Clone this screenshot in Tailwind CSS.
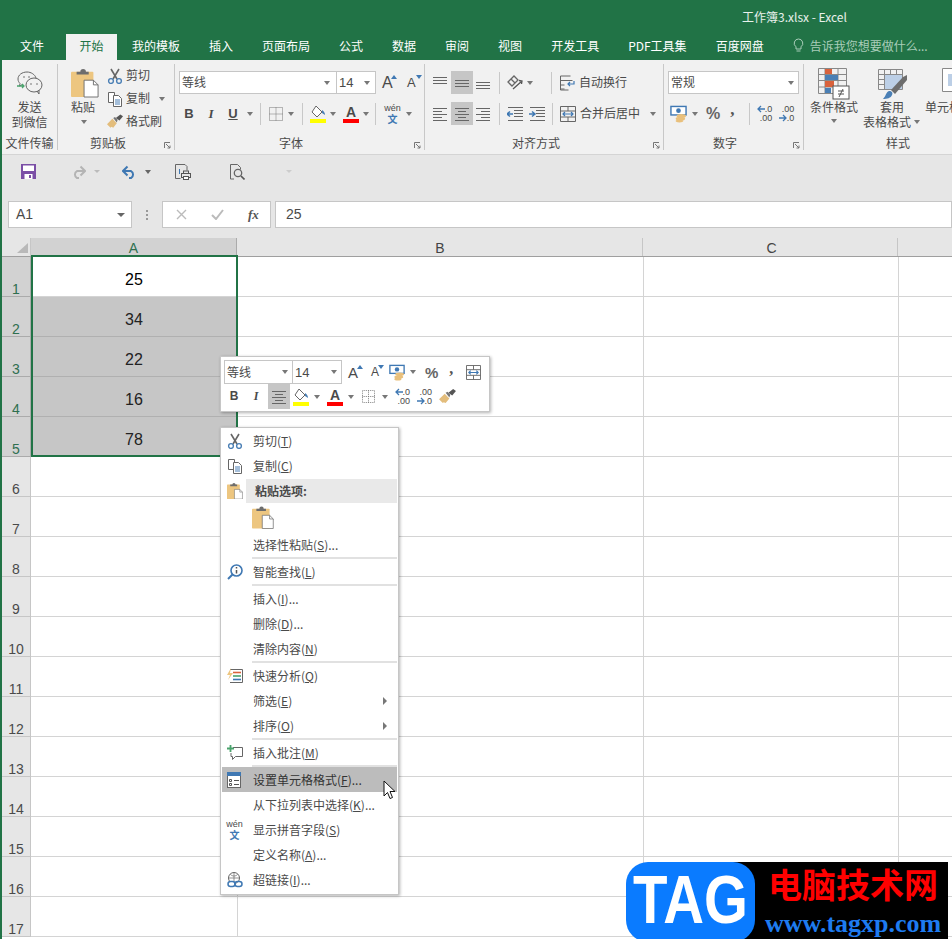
<!DOCTYPE html>
<html lang="zh-CN">
<head>
<meta charset="UTF-8">
<title>工作簿3.xlsx - Excel</title>
<script src="https://cdn.jsdelivr.net/npm/@tailwindcss/browser@4"></script>
</head>
<body class="bg-white">
<svg class="hidden" width="0" height="0">
  <defs>
    <symbol id="paste" viewBox="0 0 30 30"><rect x="0" y="3" width="24" height="27" rx="1" fill="#edc680"/><path d="M6 5V3h4a3 3 0 0 1 6 0h3v3H6z" fill="#6d6d6d"/><path d="M14 12h10l5 5v13H14z" fill="#fff" stroke="#6d6d6d"/><path d="M24 12v5h5" fill="none" stroke="#6d6d6d"/></symbol>
    <symbol id="cut" viewBox="0 0 16 16"><path d="M4 1l6 10M12 1L6 11" stroke="#666" stroke-width="1.6" fill="none"/><circle cx="4" cy="13" r="2.4" fill="none" stroke="#4a7fb5" stroke-width="1.4"/><circle cx="12" cy="13" r="2.4" fill="none" stroke="#4a7fb5" stroke-width="1.4"/></symbol>
    <symbol id="copy" viewBox="0 0 16 16"><path d="M1.500 1.500h6v10h-6z" fill="#fff" stroke="#666"/><path d="M6.500 4.500h5l3 3v8h-8z" fill="#fff" stroke="#666"/><path d="M8 9h5M8 11h5M8 13h5" stroke="#4a7fb5"/></symbol>
    <symbol id="brush" viewBox="0 0 18 16"><path d="M0 11l6-6 5 5-4 5-2-1-1 1z" fill="#e3bd7c"/><path d="M7 4l2-1 3 3-1 3z" fill="#777"/><path d="M10 4l5-4 3 2-4 5z" fill="#555"/></symbol>
    <symbol id="fill" viewBox="0 0 16 18"><path d="M6 1l6 6-5 5-5-5z" fill="#fff" stroke="#666"/><path d="M12 5c2 1 3 3 3 5l-3-2z" fill="#4a7fb5"/><rect x="0" y="14" width="16" height="4" fill="#ffff00"/></symbol>
    <symbol id="grid" viewBox="0 0 14 14"><path d="M.5.500h13v13H.500zM7 .5v13M.5 7h13" fill="none" stroke="#777" stroke-dasharray="1 1"/></symbol>
    <symbol id="money" viewBox="0 0 18 18"><rect x="1" y="1" width="16" height="9" fill="#fff" stroke="#3f78b3" stroke-width="1.500"/><circle cx="9" cy="5.500" r="2.500" fill="#3f78b3"/><ellipse cx="12" cy="11" rx="5" ry="2" fill="#e9c07c"/><ellipse cx="11" cy="14" rx="5" ry="2" fill="#e9c07c"/><ellipse cx="10" cy="16.500" rx="4" ry="1.500" fill="#e9c07c"/></symbol>
    <symbol id="merge" viewBox="0 0 16 16"><path d="M.5.500h15v15H.5zM.5 5h15M.5 11h15M8 .5V5M8 11v4.500" fill="none" stroke="#666"/><path d="M3 8h10M5 6L3 8l2 2M11 6l2 2-2 2" fill="none" stroke="#3f78b3" stroke-width="1.200"/></symbol>
  </defs>
</svg>
<div class="relative w-[952px] h-[939px] overflow-hidden border-l-2 border-[#217346] font-['Noto_Sans_CJK_SC',sans-serif] text-[12px] leading-[15px] text-[#4a4a4a]">

  <!-- title + tabs -->
  <div class="bg-[#217346] h-[60px] -ml-[2px] pl-[2px]">
    <div class="h-[34px] pl-[740px] pt-[9px] text-white/90 whitespace-nowrap">工作簿3.xlsx - Excel</div>
    <div class="flex items-start h-[26px] pt-[4px] text-white whitespace-nowrap">
      <span class="ml-[18px]">文件</span>
      <span class="ml-[22px] -mt-[4px] w-[51px] h-[26px] leading-[23px] text-center bg-[#f1f1f1] text-[#217346]">开始</span>
      <span class="ml-[15px]">我的模板</span>
      <span class="ml-[29px]">插入</span>
      <span class="ml-[29px]">页面布局</span>
      <span class="ml-[29px]">公式</span>
      <span class="ml-[29px]">数据</span>
      <span class="ml-[29px]">审阅</span>
      <span class="ml-[29px]">视图</span>
      <span class="ml-[29px]">开发工具</span>
      <span class="ml-[29px]">PDF工具集</span>
      <span class="ml-[29px]">百度网盘</span>
      <svg class="ml-[29px] w-[11px] h-[15px]" viewBox="0 0 11 15"><path d="M5.500 1a4.300 4.300 0 0 0-2.500 7.800V11h5V8.800A4.300 4.300 0 0 0 5.500 1zM3.500 13h4" fill="none" stroke="#a9cdb9"/></svg>
      <span class="ml-[6px] text-[#a9cdb9]">告诉我您想要做什么...</span>
    </div>
  </div>

  <!-- ribbon -->
  <div class="flex h-[95px] pt-[4px] bg-[#f1f1f1] border-b border-[#d4d4d4] whitespace-nowrap">

    <div class="relative flex flex-col items-center w-[56px] h-[86px] border-r border-[#c8c8c8]">
      <svg class="mt-[7px] w-[26px] h-[24px]" viewBox="0 0 26 24"><path d="M10 1C5 1 1 4 1 8c0 2 1 3.500 2 4.500L2.500 15l3-1.500" fill="none" stroke="#666"/><path d="M10 1c4 0 8 2.500 9 6" fill="none" stroke="#666"/><ellipse cx="17" cy="14" rx="8" ry="7" fill="#f1f1f1" stroke="#666"/><path d="M20 20l2 3v-4" fill="none" stroke="#666"/><circle cx="14" cy="13" r=".8" fill="#666"/><circle cx="20" cy="13" r=".8" fill="#666"/><circle cx="7" cy="6" r=".8" fill="#666"/><circle cx="12" cy="6" r=".8" fill="#666"/><path d="M0 15h7M5 13l2 2-2 2" fill="none" stroke="#4aa36d" stroke-width="1.300"/></svg>
      <div class="mt-[4px] text-center">发送<br>到微信</div>
      <div class="mt-auto h-[14px] leading-[14px]">文件传输</div>
    </div>

    <div class="relative flex flex-col w-[117px] h-[86px] border-r border-[#c8c8c8]">
      <div class="flex">
        <div class="ml-[13px] w-[28px] flex flex-col">
          <svg class="mt-[4px] w-[28px] h-[30px]"><use href="#paste"/></svg>
          <div class="mt-[1px]">粘贴</div>
          <i class="block ml-[10px] mt-[6px] w-0 h-0 border-x-[3.5px] border-t-[4px] border-x-transparent border-t-[#777]"></i>
        </div>
        <div class="ml-[8px] flex flex-col">
          <div class="flex items-center h-[23px]"><svg class="w-[16px] h-[16px]"><use href="#cut"/></svg><span class="ml-[3px] -translate-y-px">剪切</span></div>
          <div class="flex items-center h-[23px]"><svg class="w-[16px] h-[16px]"><use href="#copy"/></svg><span class="ml-[3px] -translate-y-px">复制</span><i class="block ml-[9px] w-0 h-0 border-x-[3.5px] border-t-[4px] border-x-transparent border-t-[#777]"></i></div>
          <div class="flex items-center h-[23px]"><svg class="w-[16px] h-[15px]"><use href="#brush"/></svg><span class="ml-[3px] -translate-y-px">格式刷</span></div>
        </div>
      </div>
      <div class="mt-auto h-[14px] leading-[14px] pl-[32px]">剪贴板</div>
      <svg class="absolute right-[3px] bottom-[1px] w-[7px] h-[7px]" viewBox="0 0 7 7"><path d="M.5 6V.5H6M2 2l4 4M6 3.500V6H3.500" fill="none" stroke="#777"/></svg>
    </div>

    <div class="relative flex flex-col w-[250px] h-[86px] pl-[4px] pt-[7px] border-r border-[#c8c8c8]">
      <div class="flex items-center h-[23px]">
        <div class="flex items-center justify-between w-[158px] h-[23px] pl-[2px] pr-[6px] bg-white border border-[#c6c6c6]"><span class="-translate-y-px">等线</span><i class="block w-0 h-0 border-x-[3.5px] border-t-[4px] border-x-transparent border-t-[#777]"></i></div>
        <div class="flex items-center justify-between w-[40px] h-[23px] pl-[2px] pr-[5px] -ml-[1px] bg-white border border-[#c6c6c6] font-['Liberation_Sans'] text-[13px]">14<i class="block w-0 h-0 border-x-[3.5px] border-t-[4px] border-x-transparent border-t-[#777]"></i></div>
        <span class="relative ml-[6px] w-[14px] font-['Liberation_Sans'] text-[16px]">A<i class="absolute -right-[1px] top-0 w-0 h-0 border-x-[3px] border-b-[4px] border-x-transparent border-b-[#3f78b3]"></i></span>
        <span class="relative ml-[11px] w-[14px] font-['Liberation_Sans'] text-[13px]">A<i class="absolute -right-[1px] top-0 w-0 h-0 border-x-[3px] border-t-[4px] border-x-transparent border-t-[#3f78b3]"></i></span>
      </div>
      <div class="flex items-center h-[23px] mt-[8px] -ml-[1px] font-['Liberation_Sans']">
        <b class="w-[22px] text-center text-[13px]">B</b>
        <i class="w-[22px] text-center text-[13px] font-['Liberation_Serif'] font-bold">I</i>
        <u class="w-[22px] text-center text-[13px] font-bold">U</u>
        <i class="block ml-[3px] w-0 h-0 border-x-[3.5px] border-t-[4px] border-x-transparent border-t-[#777]"></i>
        <div class="ml-[7px] w-px h-[22px] bg-[#c8c8c8]"></div>
        <svg class="ml-[8px] w-[14px] h-[14px]"><use href="#grid"/></svg>
        <i class="block ml-[5px] w-0 h-0 border-x-[3.5px] border-t-[4px] border-x-transparent border-t-[#777]"></i>
        <div class="ml-[8px] w-px h-[22px] bg-[#c8c8c8]"></div>
        <svg class="ml-[7px] w-[16px] h-[18px]"><use href="#fill"/></svg>
        <i class="block ml-[4px] w-0 h-0 border-x-[3.5px] border-t-[4px] border-x-transparent border-t-[#777]"></i>
        <span class="ml-[7px] w-[16px] h-[18px] text-center font-bold text-[14px] leading-[14px] border-b-4 border-[#ff0000]">A</span>
        <i class="block ml-[4px] w-0 h-0 border-x-[3.5px] border-t-[4px] border-x-transparent border-t-[#777]"></i>
        <div class="ml-[6px] w-px h-[22px] bg-[#c8c8c8]"></div>
        <div class="flex flex-col items-center ml-[8px] w-[17px] h-[22px]"><span class="text-[9px] leading-[10px]">wén</span><span class="font-['Noto_Sans_CJK_SC'] font-bold text-[10px] leading-[12px] text-[#3f78b3]">文</span></div>
        <i class="block ml-[5px] w-0 h-0 border-x-[3.5px] border-t-[4px] border-x-transparent border-t-[#777]"></i>
      </div>
      <div class="mt-auto h-[14px] leading-[14px] pl-[100px]">字体</div>
      <svg class="absolute right-[3px] bottom-[1px] w-[7px] h-[7px]" viewBox="0 0 7 7"><path d="M.5 6V.5H6M2 2l4 4M6 3.500V6H3.500" fill="none" stroke="#777"/></svg>
    </div>

    <div class="relative flex flex-col w-[239px] h-[86px] pl-[8px] pt-[7px] border-r border-[#c8c8c8]">
      <div class="flex items-center h-[23px]">
        <svg class="w-[14px] h-[14px]" viewBox="0 0 14 14"><path d="M0 1.500h14M0 4.500h14M0 7.500h14" stroke="#666"/></svg>
        <div class="flex items-center justify-center ml-[4px] w-[22px] h-[23px] bg-[#c6c6c6]"><svg class="w-[14px] h-[14px]" viewBox="0 0 14 14"><path d="M0 4.500h14M0 7.500h14M0 10.500h14" stroke="#666"/></svg></div>
        <svg class="ml-[3px] w-[14px] h-[14px]" viewBox="0 0 14 14"><path d="M0 6.500h14M0 9.500h14M0 12.500h14" stroke="#666"/></svg>
        <div class="ml-[9px] w-px h-[22px] bg-[#c8c8c8]"></div>
        <svg class="ml-[7px] w-[17px] h-[16px]" viewBox="0 0 17 16"><path d="M1 7l6-6 4 4-6 6zM4 4l4 4" fill="none" stroke="#666" stroke-width="1.300"/><path d="M6 14l9-8M12 5.500l3 .5-.5 3" fill="none" stroke="#555" stroke-width="1.300"/></svg>
        <i class="block ml-[3px] w-0 h-0 border-x-[3.5px] border-t-[4px] border-x-transparent border-t-[#777]"></i>
        <div class="ml-[18px] w-px h-[22px] bg-[#c8c8c8]"></div>
        <svg class="ml-[7px] w-[16px] h-[16px]" viewBox="0 0 16 16"><path d="M1.500 1h10M1.500 1v14h8M1.500 5.500h12M1.500 10h4M1.500 14h4" fill="none" stroke="#666"/><path d="M15 6v3h-6M11 7l-2 2 2 2" fill="none" stroke="#3f78b3" stroke-width="1.200"/></svg>
        <span class="ml-[4px] -translate-y-px">自动换行</span>
      </div>
      <div class="flex items-center h-[23px] mt-[8px]">
        <svg class="w-[14px] h-[14px]" viewBox="0 0 14 14"><path d="M0 1.500h14M0 4.500h9M0 7.500h14M0 10.500h9M0 13.500h14" stroke="#666"/></svg>
        <div class="flex items-center justify-center ml-[4px] w-[22px] h-[23px] bg-[#c6c6c6]"><svg class="w-[14px] h-[14px]" viewBox="0 0 14 14"><path d="M0 1.500h14M3 4.500h8M0 7.500h14M3 10.500h8M0 13.500h14" stroke="#666"/></svg></div>
        <svg class="ml-[3px] w-[14px] h-[14px]" viewBox="0 0 14 14"><path d="M0 1.500h14M5 4.500h9M0 7.500h14M5 10.500h9M0 13.500h14" stroke="#666"/></svg>
        <div class="ml-[9px] w-px h-[22px] bg-[#c8c8c8]"></div>
        <svg class="ml-[7px] w-[16px] h-[14px]" viewBox="0 0 16 14"><path d="M0 7h6M3 4.500L0 7l3 2.500" fill="none" stroke="#3f78b3" stroke-width="1.500"/><path d="M1 .5h15M7 3.500h9M7 6.500h9M7 9.500h9M1 13.500h15" stroke="#666"/></svg>
        <svg class="ml-[6px] w-[16px] h-[14px]" viewBox="0 0 16 14"><path d="M0 7h6M3 4.500L6 7 3 9.500" fill="none" stroke="#3f78b3" stroke-width="1.500"/><path d="M1 .5h15M7 3.500h9M7 6.500h9M7 9.500h9M1 13.500h15" stroke="#666"/></svg>
        <div class="ml-[7px] w-px h-[22px] bg-[#c8c8c8]"></div>
        <svg class="ml-[7px] w-[16px] h-[16px]"><use href="#merge"/></svg>
        <span class="ml-[4px] -translate-y-px">合并后居中</span>
        <i class="block ml-[10px] w-0 h-0 border-x-[3.5px] border-t-[4px] border-x-transparent border-t-[#777]"></i>
      </div>
      <div class="mt-auto h-[14px] leading-[14px] pl-[79px]">对齐方式</div>
      <svg class="absolute right-[3px] bottom-[1px] w-[7px] h-[7px]" viewBox="0 0 7 7"><path d="M.5 6V.5H6M2 2l4 4M6 3.500V6H3.500" fill="none" stroke="#777"/></svg>
    </div>

    <div class="relative flex flex-col w-[140px] h-[86px] pl-[4px] pt-[7px] border-r border-[#c8c8c8]">
      <div class="flex items-center justify-between w-[131px] h-[23px] pl-[2px] pr-[4px] bg-white border border-[#c6c6c6]"><span class="-translate-y-px">常规</span><i class="block w-0 h-0 border-x-[3.5px] border-t-[4px] border-x-transparent border-t-[#777]"></i></div>
      <div class="flex items-center h-[23px] mt-[8px]">
        <svg class="ml-[2px] w-[17px] h-[18px]"><use href="#money"/></svg>
        <i class="block ml-[5px] w-0 h-0 border-x-[3.5px] border-t-[4px] border-x-transparent border-t-[#777]"></i>
        <span class="ml-[8px] font-['Liberation_Sans'] text-[16px] font-bold text-[#666]">%</span>
        <span class="ml-[10px] w-[8px] font-['Liberation_Serif'] text-[17px] font-bold text-[#555] -mt-[8px]">,</span>
        <div class="ml-[11px] w-px h-[22px] bg-[#c8c8c8]"></div>
        <div class="relative ml-[7px] w-[15px] h-[18px] font-['Liberation_Sans'] text-[9px] leading-[9px] text-right"><svg class="absolute left-0 top-0 w-[8px] h-[8px]" viewBox="0 0 8 8"><path d="M8 4H1M4 1L1 4l3 3" fill="none" stroke="#3f78b3" stroke-width="1.300"/></svg>.0<br>.00</div>
        <div class="relative ml-[7px] w-[15px] h-[18px] font-['Liberation_Sans'] text-[9px] leading-[9px] text-right"><svg class="absolute left-0 bottom-[1px] w-[8px] h-[8px]" viewBox="0 0 8 8"><path d="M0 4h7M4 1l3 3-3 3" fill="none" stroke="#3f78b3" stroke-width="1.300"/></svg>.00<br>.0</div>
      </div>
      <div class="mt-auto h-[14px] leading-[14px] pl-[45px]">数字</div>
      <svg class="absolute right-[3px] bottom-[1px] w-[7px] h-[7px]" viewBox="0 0 7 7"><path d="M.5 6V.5H6M2 2l4 4M6 3.500V6H3.500" fill="none" stroke="#777"/></svg>
    </div>

    <div class="flex flex-col h-[86px] w-[148px] overflow-hidden">
      <div class="flex">
        <div class="ml-[6px] w-[48px] flex flex-col items-center">
          <svg class="mt-[4px] w-[32px] h-[32px]" viewBox="0 0 32 32"><path d="M.5.500h28v25H.5zM.5 6.500h28M.5 12.500h28M.5 19h28M7 .5v25M20 .5v25" fill="none" stroke="#888"/><rect x="7" y="1" width="7" height="5" fill="#d9623c"/><rect x="7" y="7" width="13" height="5" fill="#4a7fb5"/><rect x="7" y="13" width="9" height="6" fill="#d9623c"/><rect x="7" y="20" width="6" height="5" fill="#4a7fb5"/><rect x="15" y="18" width="16" height="13" fill="#fff" stroke="#555"/><path d="M20 23h6M20 26h6M25 21l-4 8" stroke="#555" fill="none"/></svg>
          <div class="-mt-[1px]">条件格式</div>
          <i class="block mt-[5px] w-0 h-0 border-x-[3.5px] border-t-[4px] border-x-transparent border-t-[#777]"></i>
        </div>
        <div class="ml-[5px] w-[56px] flex flex-col">
          <svg class="mt-[5px] ml-[15px] w-[30px] h-[30px]" viewBox="0 0 30 30"><path d="M.5.500h24v20H.5zM.5 5.500h24M.5 10.500h24M.5 15.500h24M6.500.5v20M12.500.5v20M18.500.5v20" fill="none" stroke="#888"/><rect x="7" y="6" width="17" height="14" fill="#bccfe6"/><path d="M5 30c3-3 3-7 6-8 3 0 4 2 3 4-1 3-5 4-9 4z" fill="#4a7fb5"/><path d="M13 21l12-13 4-2v5L17 25z" fill="#6d6d6d"/></svg>
          <div class="pl-[17px]">套用</div>
          <div class="flex items-center">表格格式<i class="block ml-[3px] w-0 h-0 border-x-[3.5px] border-t-[4px] border-x-transparent border-t-[#777]"></i></div>
        </div>
        <div class="ml-[6px] flex flex-col">
          <svg class="mt-[4px] ml-[17px] w-[32px] h-[30px]" viewBox="0 0 32 30"><path d="M.5.500h30v23H.5z" fill="#fff" stroke="#888"/><rect x="6" y="6" width="20" height="12" fill="#bccfe6"/></svg>
          <div class="mt-[1px]">单元格样式</div>
        </div>
      </div>
      <div class="mt-auto h-[14px] leading-[14px] pl-[82px]">样式</div>
    </div>
  </div>

  <!-- quick access -->
  <div class="flex items-center h-[35px] pb-[2px] bg-[#e6e6e6]">
    <svg class="ml-[19px] w-[15px] h-[15px]" viewBox="0 0 15 15"><path d="M0 0h15v15H0z" fill="#7b4fa6"/><rect x="2" y="1.500" width="11" height="5.500" fill="#fff"/><rect x="3.500" y="10" width="8" height="5" fill="#fff"/><rect x="8" y="11" width="2" height="3" fill="#7b4fa6"/></svg>
    <svg class="ml-[35px] w-[15px] h-[14px]" viewBox="0 0 15 14"><path d="M13.500 6H6a4 4 0 0 0 0 7h2M9.500 1.500L14 6 9.500 10.500" fill="none" stroke="#b4b4b4" stroke-width="2"/></svg>
    <i class="block ml-[8px] w-0 h-0 border-x-[3px] border-t-[3px] border-x-transparent border-t-[#bbb]"></i>
    <svg class="ml-[22px] w-[15px] h-[14px]" viewBox="0 0 15 14"><path d="M1.500 6H9a4 4 0 0 1 0 7H7M5.500 1.500L1 6l4.500 4.500" fill="none" stroke="#3f78b3" stroke-width="2"/></svg>
    <i class="block ml-[8px] w-0 h-0 border-x-[3.5px] border-t-[4px] border-x-transparent border-t-[#666]"></i>
    <svg class="ml-[24px] w-[16px] h-[16px]" viewBox="0 0 16 16"><path d="M5 .5H.5v14h5M5 .5h5l2 2v4" fill="none" stroke="#666"/><path d="M4.500 5v5" stroke="#3f78b3"/><rect x="6.500" y="9.500" width="9" height="4" fill="none" stroke="#555"/><rect x="8.500" y="7" width="5" height="2.500" fill="none" stroke="#555"/><rect x="8.500" y="12.500" width="5" height="3" fill="#fff" stroke="#555"/></svg>
    <svg class="ml-[39px] w-[15px] h-[16px]" viewBox="0 0 15 16"><path d="M4 15H.5V.5h7l3 3v2" fill="none" stroke="#666"/><circle cx="8" cy="9" r="3.700" fill="none" stroke="#666" stroke-width="1.300"/><path d="M11 12l3.500 3.500" stroke="#555" stroke-width="1.600"/></svg>
    <i class="block ml-[41px] w-0 h-0 border-x-[3px] border-t-[3px] border-x-transparent border-t-[#ccc]"></i>
  </div>

  <!-- formula bar -->
  <div class="flex items-start h-[48px] pt-[11px] bg-[#e6e6e6]">
    <div class="flex items-center justify-between ml-[6px] w-[124px] h-[27px] pl-[7px] pr-[6px] bg-white border border-[#c6c6c6] font-['Liberation_Sans'] text-[14px]">A1<i class="block w-0 h-0 border-x-[4px] border-t-[4px] border-x-transparent border-t-[#666]"></i></div>
    <div class="flex flex-col justify-center gap-[2px] ml-[14px] w-[2px] h-[27px]"><i class="block w-[2px] h-[2px] bg-[#999]"></i><i class="block w-[2px] h-[2px] bg-[#999]"></i><i class="block w-[2px] h-[2px] bg-[#999]"></i></div>
    <div class="flex items-center ml-[14px] w-[109px] h-[27px] bg-white border border-[#c6c6c6]">
      <svg class="ml-[13px] w-[11px] h-[11px]" viewBox="0 0 11 11"><path d="M1 1l9 9M10 1l-9 9" stroke="#bbb" stroke-width="1.400"/></svg>
      <svg class="ml-[24px] w-[13px] h-[11px]" viewBox="0 0 13 11"><path d="M1 6l4 4 7-9" fill="none" stroke="#bbb" stroke-width="2"/></svg>
      <span class="ml-[24px] font-['Liberation_Serif'] italic font-bold text-[13px] text-[#555]">fx</span>
    </div>
    <div class="ml-[4px] flex-1 h-[27px] pl-[10px] leading-[25px] bg-white border border-[#c6c6c6] font-['Liberation_Sans'] text-[14px]">25</div>
  </div>

  <!-- sheet -->
  <div class="flex h-[19px] bg-[#e6e6e6] border-b border-[#9f9f9f] font-['Liberation_Sans'] text-[14px] leading-[20px] text-[#444]">
    <div class="w-[29px] pl-[15px] pt-[5px] border-r border-[#c6c6c6]"><div class="w-0 h-0 border-l-[11px] border-b-[10px] border-l-transparent border-b-[#b9b9b9]"></div></div>
    <div class="w-[206px] text-center bg-[#d2d2d2] border-r border-[#ababab] text-[#2f6f4f]">A</div>
    <div class="w-[406px] pl-[1px] text-center border-r border-[#c6c6c6]">B</div>
    <div class="w-[255px] pl-[3px] text-center border-r border-[#c6c6c6]">C</div>
    <div class="flex-1"></div>
  </div>

  <div class="font-['Liberation_Sans'] text-[14px] leading-[14px]">
    <div class="flex h-[40px]"><div class="flex items-end justify-center w-[29px] bg-[#d2d2d2] border-r border-b border-[#ababab] text-[#2f6f4f]">1</div><div class="w-[206px] pt-[8px] text-center text-[16px] leading-[30px] text-black border-b border-[#d4d4d4]">25</div><div class="w-[406px] border-l border-b border-[#d4d4d4]"></div><div class="w-[255px] border-l border-b border-[#d4d4d4]"></div><div class="flex-1 border-l border-b border-[#d4d4d4]"></div></div>
    <div class="flex h-[40px]"><div class="flex items-end justify-center w-[29px] bg-[#d2d2d2] border-r border-b border-[#ababab] text-[#2f6f4f]">2</div><div class="w-[206px] pt-[8px] text-center text-[16px] leading-[30px] text-[#222] bg-[#c6c6c6] border-b border-[#b0b0b0]">34</div><div class="w-[406px] border-l border-b border-[#d4d4d4]"></div><div class="w-[255px] border-l border-b border-[#d4d4d4]"></div><div class="flex-1 border-l border-b border-[#d4d4d4]"></div></div>
    <div class="flex h-[40px]"><div class="flex items-end justify-center w-[29px] bg-[#d2d2d2] border-r border-b border-[#ababab] text-[#2f6f4f]">3</div><div class="w-[206px] pt-[8px] text-center text-[16px] leading-[30px] text-[#222] bg-[#c6c6c6] border-b border-[#b0b0b0]">22</div><div class="w-[406px] border-l border-b border-[#d4d4d4]"></div><div class="w-[255px] border-l border-b border-[#d4d4d4]"></div><div class="flex-1 border-l border-b border-[#d4d4d4]"></div></div>
    <div class="flex h-[40px]"><div class="flex items-end justify-center w-[29px] bg-[#d2d2d2] border-r border-b border-[#ababab] text-[#2f6f4f]">4</div><div class="w-[206px] pt-[8px] text-center text-[16px] leading-[30px] text-[#222] bg-[#c6c6c6] border-b border-[#b0b0b0]">16</div><div class="w-[406px] border-l border-b border-[#d4d4d4]"></div><div class="w-[255px] border-l border-b border-[#d4d4d4]"></div><div class="flex-1 border-l border-b border-[#d4d4d4]"></div></div>
    <div class="flex h-[40px]"><div class="flex items-end justify-center w-[29px] bg-[#d2d2d2] border-r border-b border-[#ababab] text-[#2f6f4f]">5</div><div class="w-[206px] pt-[8px] text-center text-[16px] leading-[30px] text-[#222] bg-[#c6c6c6] border-b border-[#b0b0b0]">78</div><div class="w-[406px] border-l border-b border-[#d4d4d4]"></div><div class="w-[255px] border-l border-b border-[#d4d4d4]"></div><div class="flex-1 border-l border-b border-[#d4d4d4]"></div></div>
    <div class="flex h-[40px]"><div class="flex items-end justify-center w-[29px] bg-[#e6e6e6] border-r border-b border-[#c6c6c6]">6</div><div class="w-[206px] border-b border-[#d4d4d4]"></div><div class="w-[406px] border-l border-b border-[#d4d4d4]"></div><div class="w-[255px] border-l border-b border-[#d4d4d4]"></div><div class="flex-1 border-l border-b border-[#d4d4d4]"></div></div>
    <div class="flex h-[40px]"><div class="flex items-end justify-center w-[29px] bg-[#e6e6e6] border-r border-b border-[#c6c6c6]">7</div><div class="w-[206px] border-b border-[#d4d4d4]"></div><div class="w-[406px] border-l border-b border-[#d4d4d4]"></div><div class="w-[255px] border-l border-b border-[#d4d4d4]"></div><div class="flex-1 border-l border-b border-[#d4d4d4]"></div></div>
    <div class="flex h-[40px]"><div class="flex items-end justify-center w-[29px] bg-[#e6e6e6] border-r border-b border-[#c6c6c6]">8</div><div class="w-[206px] border-b border-[#d4d4d4]"></div><div class="w-[406px] border-l border-b border-[#d4d4d4]"></div><div class="w-[255px] border-l border-b border-[#d4d4d4]"></div><div class="flex-1 border-l border-b border-[#d4d4d4]"></div></div>
    <div class="flex h-[40px]"><div class="flex items-end justify-center w-[29px] bg-[#e6e6e6] border-r border-b border-[#c6c6c6]">9</div><div class="w-[206px] border-b border-[#d4d4d4]"></div><div class="w-[406px] border-l border-b border-[#d4d4d4]"></div><div class="w-[255px] border-l border-b border-[#d4d4d4]"></div><div class="flex-1 border-l border-b border-[#d4d4d4]"></div></div>
    <div class="flex h-[40px]"><div class="flex items-end justify-center w-[29px] bg-[#e6e6e6] border-r border-b border-[#c6c6c6]">10</div><div class="w-[206px] border-b border-[#d4d4d4]"></div><div class="w-[406px] border-l border-b border-[#d4d4d4]"></div><div class="w-[255px] border-l border-b border-[#d4d4d4]"></div><div class="flex-1 border-l border-b border-[#d4d4d4]"></div></div>
    <div class="flex h-[40px]"><div class="flex items-end justify-center w-[29px] bg-[#e6e6e6] border-r border-b border-[#c6c6c6]">11</div><div class="w-[206px] border-b border-[#d4d4d4]"></div><div class="w-[406px] border-l border-b border-[#d4d4d4]"></div><div class="w-[255px] border-l border-b border-[#d4d4d4]"></div><div class="flex-1 border-l border-b border-[#d4d4d4]"></div></div>
    <div class="flex h-[40px]"><div class="flex items-end justify-center w-[29px] bg-[#e6e6e6] border-r border-b border-[#c6c6c6]">12</div><div class="w-[206px] border-b border-[#d4d4d4]"></div><div class="w-[406px] border-l border-b border-[#d4d4d4]"></div><div class="w-[255px] border-l border-b border-[#d4d4d4]"></div><div class="flex-1 border-l border-b border-[#d4d4d4]"></div></div>
    <div class="flex h-[40px]"><div class="flex items-end justify-center w-[29px] bg-[#e6e6e6] border-r border-b border-[#c6c6c6]">13</div><div class="w-[206px] border-b border-[#d4d4d4]"></div><div class="w-[406px] border-l border-b border-[#d4d4d4]"></div><div class="w-[255px] border-l border-b border-[#d4d4d4]"></div><div class="flex-1 border-l border-b border-[#d4d4d4]"></div></div>
    <div class="flex h-[40px]"><div class="flex items-end justify-center w-[29px] bg-[#e6e6e6] border-r border-b border-[#c6c6c6]">14</div><div class="w-[206px] border-b border-[#d4d4d4]"></div><div class="w-[406px] border-l border-b border-[#d4d4d4]"></div><div class="w-[255px] border-l border-b border-[#d4d4d4]"></div><div class="flex-1 border-l border-b border-[#d4d4d4]"></div></div>
    <div class="flex h-[40px]"><div class="flex items-end justify-center w-[29px] bg-[#e6e6e6] border-r border-b border-[#c6c6c6]">15</div><div class="w-[206px] border-b border-[#d4d4d4]"></div><div class="w-[406px] border-l border-b border-[#d4d4d4]"></div><div class="w-[255px] border-l border-b border-[#d4d4d4]"></div><div class="flex-1 border-l border-b border-[#d4d4d4]"></div></div>
    <div class="flex h-[40px]"><div class="flex items-end justify-center w-[29px] bg-[#e6e6e6] border-r border-b border-[#c6c6c6]">16</div><div class="w-[206px] border-b border-[#d4d4d4]"></div><div class="w-[406px] border-l border-b border-[#d4d4d4]"></div><div class="w-[255px] border-l border-b border-[#d4d4d4]"></div><div class="flex-1 border-l border-b border-[#d4d4d4]"></div></div>
    <div class="flex h-[40px]"><div class="flex items-end justify-center w-[29px] bg-[#e6e6e6] border-r border-b border-[#c6c6c6]">17</div><div class="w-[206px] border-b border-[#d4d4d4]"></div><div class="w-[406px] border-l border-b border-[#d4d4d4]"></div><div class="w-[255px] border-l border-b border-[#d4d4d4]"></div><div class="flex-1 border-l border-b border-[#d4d4d4]"></div></div>
  </div>

  <!-- selection outline -->
  <div class="absolute left-[29px] top-[255px] w-[207px] h-[202px] border-[2px] border-[#217346]"></div>

  <!-- mini toolbar -->
  <div class="absolute left-[218px] top-[356px] w-[270px] h-[56px] pt-[3px] pl-[3px] bg-white border border-[#c6c6c6] shadow-[1px_1px_3px_rgba(0,0,0,.3)] whitespace-nowrap">
    <div class="flex items-center h-[24px]">
      <div class="flex items-center justify-between w-[69px] h-[24px] pl-[2px] pr-[4px] border border-[#c6c6c6]"><span class="-translate-y-px">等线</span><i class="block w-0 h-0 border-x-[3px] border-t-[4px] border-x-transparent border-t-[#777]"></i></div>
      <div class="flex items-center justify-between w-[50px] h-[24px] pl-[2px] pr-[4px] -ml-[1px] border border-[#c6c6c6] font-['Liberation_Sans'] text-[13px]">14<i class="block w-0 h-0 border-x-[3px] border-t-[4px] border-x-transparent border-t-[#777]"></i></div>
      <span class="relative ml-[6px] w-[14px] font-['Liberation_Sans'] text-[15px]">A<i class="absolute -right-[1px] top-0 w-0 h-0 border-x-[3px] border-b-[4px] border-x-transparent border-b-[#3f78b3]"></i></span>
      <span class="relative ml-[9px] w-[12px] font-['Liberation_Sans'] text-[12px]">A<i class="absolute -right-[1px] top-0 w-0 h-0 border-x-[3px] border-t-[4px] border-x-transparent border-t-[#3f78b3]"></i></span>
      <svg class="ml-[6px] w-[16px] h-[17px]"><use href="#money"/></svg>
      <i class="block ml-[5px] w-0 h-0 border-x-[3px] border-t-[4px] border-x-transparent border-t-[#777]"></i>
      <span class="ml-[9px] font-['Liberation_Sans'] text-[15px] font-bold text-[#666]">%</span>
      <span class="ml-[11px] w-[6px] font-['Liberation_Serif'] text-[16px] font-bold text-[#555] -mt-[7px]">,</span>
      <svg class="ml-[11px] w-[15px] h-[15px]"><use href="#merge"/></svg>
    </div>
    <div class="flex items-center h-[25px] font-['Liberation_Sans']">
      <b class="ml-[1px] w-[18px] text-center text-[12px]">B</b>
      <i class="ml-[4px] w-[18px] text-center text-[12px] font-['Liberation_Serif'] font-bold">I</i>
      <div class="flex items-center justify-center ml-[3px] w-[22px] h-[25px] bg-[#c6c6c6]"><svg class="w-[14px] h-[14px]" viewBox="0 0 14 14"><path d="M0 1.500h14M3 4.500h8M0 7.500h14M3 10.500h8M0 13.500h14" stroke="#666"/></svg></div>
      <svg class="ml-[3px] w-[16px] h-[18px]"><use href="#fill"/></svg>
      <i class="block ml-[5px] w-0 h-0 border-x-[3px] border-t-[4px] border-x-transparent border-t-[#777]"></i>
      <span class="ml-[7px] w-[16px] h-[18px] text-center font-bold text-[14px] leading-[14px] border-b-4 border-[#ff0000]">A</span>
      <i class="block ml-[5px] w-0 h-0 border-x-[3px] border-t-[4px] border-x-transparent border-t-[#777]"></i>
      <svg class="ml-[8px] w-[13px] h-[13px]"><use href="#grid"/></svg>
      <i class="block ml-[7px] w-0 h-0 border-x-[3px] border-t-[4px] border-x-transparent border-t-[#777]"></i>
      <div class="relative ml-[7px] w-[15px] h-[18px] text-[9px] leading-[9px] text-right"><svg class="absolute left-0 top-0 w-[8px] h-[8px]" viewBox="0 0 8 8"><path d="M8 4H1M4 1L1 4l3 3" fill="none" stroke="#3f78b3" stroke-width="1.300"/></svg>.0<br>.00</div>
      <div class="relative ml-[7px] w-[15px] h-[18px] text-[9px] leading-[9px] text-right"><svg class="absolute left-0 bottom-[1px] w-[8px] h-[8px]" viewBox="0 0 8 8"><path d="M0 4h7M4 1l3 3-3 3" fill="none" stroke="#3f78b3" stroke-width="1.300"/></svg>.00<br>.0</div>
      <svg class="ml-[7px] w-[17px] h-[15px]"><use href="#brush"/></svg>
    </div>
  </div>

  <!-- context menu -->
  <div class="absolute left-[218px] top-[427px] w-[179px] h-[468px] bg-white border border-[#c6c6c6] shadow-[1px_1px_3px_rgba(0,0,0,.3)] whitespace-nowrap">
    <div class="flex items-center h-[25px] pl-[6px]"><svg class="w-[16px] h-[16px]"><use href="#cut"/></svg><span class="ml-[10px]">剪切(<u>T</u>)</span></div>
    <div class="flex items-center h-[25px] pl-[6px]"><svg class="w-[16px] h-[16px]"><use href="#copy"/></svg><span class="ml-[10px]">复制(<u>C</u>)</span></div>
    <div class="flex items-center h-[25px] pl-[6px]"><svg class="w-[16px] h-[16px]"><use href="#paste"/></svg><span class="flex items-center ml-[3px] w-[151px] h-[24px] pl-[9px] bg-[#e9e9e9] font-bold">粘贴选项:</span></div>
    <div class="h-[29px] pl-[31px] pt-[3px]"><svg class="w-[22px] h-[23px]"><use href="#paste"/></svg></div>
    <div class="flex items-center h-[25px] pl-[32px]">选择性粘贴(<u>S</u>)...</div>
    <div class="ml-[31px] mr-[1px] h-[2px] bg-[#e1e1e1]"></div>
    <div class="flex items-center h-[25px] pl-[6px]"><svg class="w-[16px] h-[16px]" viewBox="0 0 16 16"><circle cx="9.500" cy="6.500" r="5.500" fill="#fff" stroke="#3f78b3" stroke-width="1.600"/><path d="M5.500 10.500L1 15" stroke="#3f78b3" stroke-width="2"/><path d="M9.500 6v3.500M9.500 3v1.500" stroke="#555" stroke-width="1.500"/></svg><span class="ml-[10px]">智能查找(<u>L</u>)</span></div>
    <div class="ml-[31px] mr-[1px] h-[2px] bg-[#e1e1e1]"></div>
    <div class="flex items-center h-[25px] pl-[32px]">插入(<u>I</u>)...</div>
    <div class="flex items-center h-[25px] pl-[32px]">删除(<u>D</u>)...</div>
    <div class="flex items-center h-[25px] pl-[32px]">清除内容(<u>N</u>)</div>
    <div class="ml-[31px] mr-[1px] h-[2px] bg-[#e1e1e1]"></div>
    <div class="flex items-center h-[25px] pl-[6px]"><svg class="w-[16px] h-[16px]" viewBox="0 0 16 16"><path d="M3 1.500h12.500v13H3" fill="none" stroke="#666"/><path d="M6 4.500h8" stroke="#d9623c" stroke-width="1.600"/><path d="M6 8h8" stroke="#4aa36d" stroke-width="1.600"/><path d="M6 11.500h8" stroke="#3f78b3" stroke-width="1.600"/><path d="M4 0L0 7h3l-2 5 5-7H3z" fill="#edc680"/></svg><span class="ml-[10px]">快速分析(<u>Q</u>)</span></div>
    <div class="relative flex items-center h-[25px] pl-[32px]">筛选(<u>E</u>)<i class="absolute right-[11px] top-[9px] w-0 h-0 border-y-[4px] border-l-[4px] border-y-transparent border-l-[#777]"></i></div>
    <div class="relative flex items-center h-[25px] pl-[32px]">排序(<u>O</u>)<i class="absolute right-[11px] top-[9px] w-0 h-0 border-y-[4px] border-l-[4px] border-y-transparent border-l-[#777]"></i></div>
    <div class="ml-[31px] mr-[1px] h-[2px] bg-[#e1e1e1]"></div>
    <div class="flex items-center h-[25px] pl-[6px]"><svg class="w-[16px] h-[16px]" viewBox="0 0 16 16"><path d="M6 2.500h9.500v9h-7l-3 3v-3H4V8" fill="none" stroke="#666"/><path d="M3.500 0v7M0 3.500h7" stroke="#4aa36d" stroke-width="1.800"/></svg><span class="ml-[10px]">插入批注(<u>M</u>)</span></div>
    <div class="ml-[31px] mr-[1px] h-[2px] bg-[#e1e1e1]"></div>
    <div class="flex items-center h-[25px] ml-[1px] mr-[1px] pl-[5px] bg-[#bcbcbc] text-[#333]"><svg class="w-[14px] h-[16px]" viewBox="0 0 14 16"><rect x=".5" y=".5" width="13" height="15" fill="#fff" stroke="#666"/><rect x="0" y="0" width="14" height="4" fill="#3f78b3"/><path d="M2.500 7.500h2v2h-2zM2.500 11.500h2v2h-2zM7 8.500h5M7 12.500h5" fill="none" stroke="#555"/></svg><span class="ml-[12px]">设置单元格格式(<u>F</u>)...</span></div>
    <div class="flex items-center h-[25px] pl-[32px]">从下拉列表中选择(<u>K</u>)...</div>
    <div class="flex items-center h-[25px] pl-[5px]"><div class="flex flex-col items-center w-[17px] h-[22px] font-['Liberation_Sans']"><span class="text-[9px] leading-[10px]">wén</span><span class="font-['Noto_Sans_CJK_SC'] font-bold text-[10px] leading-[12px] text-[#3f78b3]">文</span></div><span class="ml-[10px]">显示拼音字段(<u>S</u>)</span></div>
    <div class="flex items-center h-[25px] pl-[32px]">定义名称(<u>A</u>)...</div>
    <div class="flex items-center h-[25px] pl-[6px]"><svg class="w-[16px] h-[16px]" viewBox="0 0 16 16"><circle cx="7" cy="6" r="5.500" fill="none" stroke="#666"/><path d="M1.500 6h11M7 .5v11M3.500 2.500c2 2 5 2 7 0" fill="none" stroke="#666" stroke-width=".7"/><rect x="1" y="9.500" width="7" height="5" rx="2.500" fill="#fff" stroke="#3f78b3" stroke-width="1.500"/><rect x="8" y="9.500" width="7" height="5" rx="2.500" fill="none" stroke="#3f78b3" stroke-width="1.500"/></svg><span class="ml-[10px]">超链接(<u>I</u>)...</span></div>
  </div>

  <!-- mouse pointer -->
  <svg class="absolute left-[381px] top-[780px] w-[14px] h-[20px]" viewBox="0 0 14 20"><path d="M1 1v15l3.500-3.500 2.500 6 2.500-1-2.500-6H12z" fill="#fff" stroke="#111"/></svg>

  <!-- watermark -->
  <div class="absolute left-[688px] top-[862px] w-[258px] h-[77px] bg-black">
    <div class="absolute left-[78px] top-[3px] font-['Noto_Sans_CJK_SC',sans-serif] font-bold text-[34px] leading-[38px] text-[#ff0000] whitespace-nowrap">电脑技术网</div>
    <div class="absolute left-[75px] top-[47px] font-['Liberation_Serif',serif] font-bold text-[26px] leading-[30px] text-[#1e7bf0] whitespace-nowrap">www.tagxp.com</div>
  </div>
  <div class="absolute left-[624px] top-[862px] w-[129px] h-[80px] rounded-[22px] bg-[#0a7bff] overflow-hidden">
    <div class="ml-[7px] mt-[-3px] w-[136px] origin-left scale-x-[.83] font-['Liberation_Sans',sans-serif] font-bold text-[68px] leading-[80px] text-white whitespace-nowrap">TAG</div>
  </div>
</div>
</body>
</html>
